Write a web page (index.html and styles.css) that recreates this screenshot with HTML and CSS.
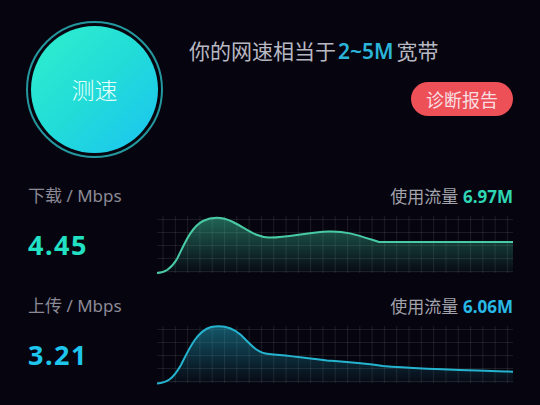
FILE: index.html
```html
<!DOCTYPE html>
<html lang="zh-CN">
<head>
<meta charset="utf-8">
<title>测速</title>
<link rel="stylesheet" href="styles.css">
</head>
<body>
<div class="app">
  <section class="top">
    <div class="ring">
      <div class="ball">测速</div>
    </div>
    <div class="info">
      <p class="headline">你的网速相当于<span class="hl">2~5M</span>宽带</p>
      <button class="report">诊断报告</button>
    </div>
  </section>

  <section class="stat down">
    <div class="meta">
      <div class="label">下载 / Mbps</div>
      <div class="value">4.45</div>
    </div>
    <div class="panel">
      <div class="traffic">使用流量 <b>6.97M</b></div>
      <svg class="chart" viewBox="0 0 356 62" width="356" height="62">
        <defs>
          <pattern id="g1" x="5.5" y="6" width="12.3" height="13" patternUnits="userSpaceOnUse">
            <rect class="gl" x="0" y="0" width="1" height="13"/>
            <rect class="gl" x="0" y="0" width="12.3" height="1"/>
          </pattern>
          <linearGradient id="f1" x1="0" y1="0" x2="0" y2="1">
            <stop offset="0" stop-color="#3cc39c" stop-opacity="0.5"/>
            <stop offset="1" stop-color="#3cc39c" stop-opacity="0.02"/>
          </linearGradient>
        </defs>
        <rect x="0" y="3" width="356" height="57" fill="url(#g1)"/>
        <path fill="url(#f1)" d="M0,60 C8,60 14,56 20,46 C27,32 34,14 46,8 C56,3 66,4 76,9 C90,16 98,24 112,24.5 C130,25 150,19 172,18.5 C190,18 200,22 222,29 L356,29 L356,60 Z"/>
        <path class="line l1" d="M0,60 C8,60 14,56 20,46 C27,32 34,14 46,8 C56,3 66,4 76,9 C90,16 98,24 112,24.5 C130,25 150,19 172,18.5 C190,18 200,22 222,29 L356,29"/>
      </svg>
    </div>
  </section>

  <section class="stat up">
    <div class="meta">
      <div class="label">上传 / Mbps</div>
      <div class="value">3.21</div>
    </div>
    <div class="panel">
      <div class="traffic">使用流量 <b>6.06M</b></div>
      <svg class="chart" viewBox="0 0 356 62" width="356" height="62">
        <defs>
          <pattern id="g2" x="5.5" y="6" width="12.3" height="13" patternUnits="userSpaceOnUse">
            <rect class="gl" x="0" y="0" width="1" height="13"/>
            <rect class="gl" x="0" y="0" width="12.3" height="1"/>
          </pattern>
          <linearGradient id="f2" x1="0" y1="0" x2="0" y2="1">
            <stop offset="0" stop-color="#22a9c4" stop-opacity="0.5"/>
            <stop offset="1" stop-color="#22a9c4" stop-opacity="0.02"/>
          </linearGradient>
        </defs>
        <rect x="0" y="3" width="356" height="57" fill="url(#g2)"/>
        <path fill="url(#f2)" d="M0,60.5 C10,60 16,56 24,42 C32,26 40,8 54,4 C64,2 74,3 84,12 C94,22 100,30 112,31 C130,32.5 150,35 170,37.5 C190,39 205,40 226,43 C260,46 300,47 356,48.7 L356,60 L0,60 Z"/>
        <path class="line l2" d="M0,60.5 C10,60 16,56 24,42 C32,26 40,8 54,4 C64,2 74,3 84,12 C94,22 100,30 112,31 C130,32.5 150,35 170,37.5 C190,39 205,40 226,43 C260,46 300,47 356,48.7"/>
      </svg>
    </div>
  </section>
</div>
</body>
</html>
```

FILE: styles.css
```css
* { box-sizing: border-box; }
html, body { margin: 0; padding: 0; }
body {
  width: 540px;
  height: 405px;
  overflow: hidden;
  background: #06050f;
  font-family: "Noto Sans CJK SC", "Noto Sans", sans-serif;
}
.app {
  padding: 21px 27px 0 26px;
}
.top {
  display: flex;
  align-items: flex-start;
}
.ring {
  flex: none;
  width: 137px;
  height: 137px;
  border: 2px solid #23999f;
  border-radius: 50%;
  padding: 3px;
}
.ball {
  width: 100%;
  height: 100%;
  border-radius: 50%;
  background: linear-gradient(135deg, #2ff0cc 0%, #22dcd8 50%, #1bc3f2 100%);
  display: flex;
  align-items: center;
  justify-content: center;
  color: #e6fffa;
  font-size: 23px;
  font-weight: 300;
  padding-bottom: 2px;
}
.info {
  flex: 1;
  margin-left: 26px;
  margin-top: 15px;
  display: flex;
  flex-direction: column;
  align-items: flex-end;
}
.headline {
  align-self: flex-start;
  margin: 0;
  font-size: 21px;
  line-height: 28px;
  color: #b8b8c2;
}
.hl {
  font-family: "Noto Sans", sans-serif;
  font-weight: 600;
  color: #2bb4d8;
  margin: 0 3px 0 2px;
}
.report {
  margin-top: 17px;
  height: 34px;
  padding: 0 15px;
  border: none;
  border-radius: 17px;
  background: #ee5058;
  color: #f8dfe2;
  font-family: "Noto Sans CJK SC", sans-serif;
  font-size: 18px;
  line-height: 34px;
}
.stat {
  display: grid;
  grid-template-columns: 131px 1fr;
}
.down { margin-top: 27px; }
.up { margin-top: 20px; }
.meta { padding-left: 2px; }
.label {
  font-family: "Noto Sans", "Noto Sans CJK SC", sans-serif;
  font-size: 17px;
  line-height: 22px;
  color: #8b8a96;
}
.value {
  margin-top: 22px;
  font-family: "Noto Sans", sans-serif;
  font-weight: 700;
  font-size: 27px;
  line-height: 32px;
  letter-spacing: 1.5px;
}
.down .value { color: #22e0c4; }
.up .value { color: #1ec6ee; }
.traffic {
  text-align: right;
  font-size: 17px;
  line-height: 22px;
  color: #a3a3ac;
}
.traffic b {
  font-family: "Noto Sans", sans-serif;
  font-weight: 700;
  font-size: 17px;
  margin-left: 1px;
}
.down .traffic b { color: #2ed6b4; }
.up .traffic b { color: #29b9e6; }
.chart {
  display: block;
  margin-top: 5px;
}
.gl { fill: rgba(255, 255, 255, 0.085); }
.line {
  fill: none;
  stroke-width: 2;
  stroke-linecap: round;
}
.l1 { stroke: #48cba4; }
.l2 { stroke: #25b4cf; }
```
